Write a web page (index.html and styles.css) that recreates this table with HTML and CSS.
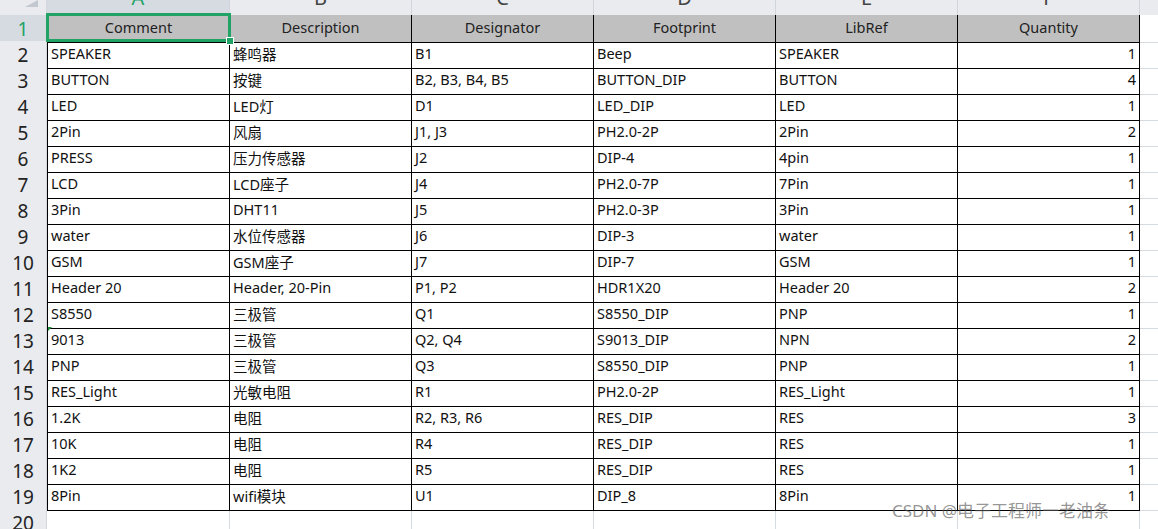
FILE: index.html
```html
<!DOCTYPE html>
<html>
<head>
<meta charset="utf-8">
<link rel="stylesheet" href="styles.css">
</head>
<body>
<div class="sheet">
  <div class="row colhdr">
    <div class="corner"><span class="tri"></span></div>
    <div class="ch sel"><span>A</span></div>
    <div class="ch"><span>B</span></div>
    <div class="ch"><span>C</span></div>
    <div class="ch"><span>D</span></div>
    <div class="ch"><span>E</span></div>
    <div class="ch"><span>F</span></div>
    <div class="ch rest"></div>
  </div>
  <div class="row head">
    <div class="rh sel">1</div>
    <div class="c a ctr">Comment</div><div class="c ctr">Description</div><div class="c ctr">Designator</div><div class="c ctr">Footprint</div><div class="c ctr">LibRef</div><div class="c ctr">Quantity</div><div class="x"></div>
  </div>
  <div class="row"><div class="rh">2</div><div class="c a">SPEAKER</div><div class="c cj">蜂鸣器</div><div class="c">B1</div><div class="c">Beep</div><div class="c">SPEAKER</div><div class="c n">1</div><div class="x"></div></div>
  <div class="row"><div class="rh">3</div><div class="c a">BUTTON</div><div class="c cj">按键</div><div class="c">B2, B3, B4, B5</div><div class="c">BUTTON_DIP</div><div class="c">BUTTON</div><div class="c n">4</div><div class="x"></div></div>
  <div class="row"><div class="rh">4</div><div class="c a">LED</div><div class="c cj">LED灯</div><div class="c">D1</div><div class="c">LED_DIP</div><div class="c">LED</div><div class="c n">1</div><div class="x"></div></div>
  <div class="row"><div class="rh">5</div><div class="c a">2Pin</div><div class="c cj">风扇</div><div class="c">J1, J3</div><div class="c">PH2.0-2P</div><div class="c">2Pin</div><div class="c n">2</div><div class="x"></div></div>
  <div class="row"><div class="rh">6</div><div class="c a">PRESS</div><div class="c cj">压力传感器</div><div class="c">J2</div><div class="c">DIP-4</div><div class="c">4pin</div><div class="c n">1</div><div class="x"></div></div>
  <div class="row"><div class="rh">7</div><div class="c a">LCD</div><div class="c cj">LCD座子</div><div class="c">J4</div><div class="c">PH2.0-7P</div><div class="c">7Pin</div><div class="c n">1</div><div class="x"></div></div>
  <div class="row"><div class="rh">8</div><div class="c a">3Pin</div><div class="c">DHT11</div><div class="c">J5</div><div class="c">PH2.0-3P</div><div class="c">3Pin</div><div class="c n">1</div><div class="x"></div></div>
  <div class="row"><div class="rh">9</div><div class="c a">water</div><div class="c cj">水位传感器</div><div class="c">J6</div><div class="c">DIP-3</div><div class="c">water</div><div class="c n">1</div><div class="x"></div></div>
  <div class="row"><div class="rh">10</div><div class="c a">GSM</div><div class="c cj">GSM座子</div><div class="c">J7</div><div class="c">DIP-7</div><div class="c">GSM</div><div class="c n">1</div><div class="x"></div></div>
  <div class="row"><div class="rh">11</div><div class="c a">Header 20</div><div class="c">Header, 20-Pin</div><div class="c">P1, P2</div><div class="c">HDR1X20</div><div class="c">Header 20</div><div class="c n">2</div><div class="x"></div></div>
  <div class="row"><div class="rh">12</div><div class="c a">S8550</div><div class="c cj">三极管</div><div class="c">Q1</div><div class="c">S8550_DIP</div><div class="c">PNP</div><div class="c n">1</div><div class="x"></div></div>
  <div class="row"><div class="rh">13</div><div class="c a txt">9013</div><div class="c cj">三极管</div><div class="c">Q2, Q4</div><div class="c">S9013_DIP</div><div class="c">NPN</div><div class="c n">2</div><div class="x"></div></div>
  <div class="row"><div class="rh">14</div><div class="c a">PNP</div><div class="c cj">三极管</div><div class="c">Q3</div><div class="c">S8550_DIP</div><div class="c">PNP</div><div class="c n">1</div><div class="x"></div></div>
  <div class="row"><div class="rh">15</div><div class="c a">RES_Light</div><div class="c cj">光敏电阻</div><div class="c">R1</div><div class="c">PH2.0-2P</div><div class="c">RES_Light</div><div class="c n">1</div><div class="x"></div></div>
  <div class="row"><div class="rh">16</div><div class="c a">1.2K</div><div class="c cj">电阻</div><div class="c">R2, R3, R6</div><div class="c">RES_DIP</div><div class="c">RES</div><div class="c n">3</div><div class="x"></div></div>
  <div class="row"><div class="rh">17</div><div class="c a">10K</div><div class="c cj">电阻</div><div class="c">R4</div><div class="c">RES_DIP</div><div class="c">RES</div><div class="c n">1</div><div class="x"></div></div>
  <div class="row"><div class="rh">18</div><div class="c a">1K2</div><div class="c cj">电阻</div><div class="c">R5</div><div class="c">RES_DIP</div><div class="c">RES</div><div class="c n">1</div><div class="x"></div></div>
  <div class="row"><div class="rh">19</div><div class="c a">8Pin</div><div class="c cj">wifi模块</div><div class="c">U1</div><div class="c">DIP_8</div><div class="c">8Pin</div><div class="c n">1</div><div class="x"></div></div>
  <div class="row empty"><div class="rh">20</div><div class="e"></div><div class="e"></div><div class="e"></div><div class="e"></div><div class="e"></div><div class="e"></div><div class="x"></div></div>

  <div class="selbox"><span class="handle"></span></div>
  <div class="watermark">CSDN @电子工程师一老油条</div>
</div>
</body>
</html>
```

FILE: styles.css
```css
* { box-sizing: border-box; }
html, body {
  margin: 0;
  padding: 0;
  background: #ffffff;
  overflow: hidden;
}
body {
  width: 1158px;
  height: 529px;
  font-family: "Noto Sans", "Noto Sans CJK SC", sans-serif;
  font-size: 14.5px;
  color: #111;
}
.sheet {
  position: relative;
  width: 1158px;
  height: 529px;
  overflow: hidden;
}
.row {
  display: grid;
  grid-template-columns: 47px 183px repeat(5, 182px) 1fr;
  height: 26px;
}
.colhdr {
  height: 15px;
  background: #e9ebef;
}
.corner {
  position: relative;
  background: #e9ebef;
  border-right: 1px solid #d3d7de;
}
.tri {
  position: absolute;
  right: 8px;
  bottom: 8px;
  width: 0;
  height: 0;
  border-left: 13px solid transparent;
  border-bottom: 7px solid #c3c7ce;
}
.ch {
  position: relative;
  overflow: hidden;
  border-right: 1px solid #d0d4db;
  display: flex;
  justify-content: center;
  color: #444;
  font-size: 20px;
  line-height: 20px;
}
.ch span {
  margin-top: -12px;
}
.ch.sel {
  background: #d6dae1;
  color: #21a366;
}
.ch.rest {
  border-right: none;
}
.rh {
  background: #e9ebef;
  border-right: 1px solid #d3d7de;
  border-bottom: 1px solid #d3d7de;
  display: flex;
  align-items: center;
  justify-content: center;
  font-size: 19px;
  color: #222;
  padding-top: 1px;
}
.rh.sel {
  background: #d6dae1;
  color: #21a366;
}
.c {
  position: relative;
  border-right: 1px solid #000;
  border-bottom: 1px solid #000;
  display: flex;
  align-items: center;
  padding: 0 3px 3px 3px;
  white-space: nowrap;
  overflow: hidden;
}
.c.cj {
  padding-bottom: 3px;
}
.c.a {
  border-left: 1px solid #000;
}
.c.ctr {
  justify-content: center;
  color: #222;
}
.c.n {
  justify-content: flex-end;
}
.head .c {
  background: #c0c0c0;
}
.c.txt::before {
  content: "";
  position: absolute;
  left: 0;
  top: 0;
  width: 0;
  height: 0;
  border-top: 4px solid #1e8c3a;
  border-right: 4px solid transparent;
}
.x {
  border-bottom: 1px solid #d6dae1;
}
.e {
  border-right: 1px solid #d6dae1;
  border-bottom: 1px solid #d6dae1;
}
.empty .e:first-of-type {
  border-left: 1px solid #d6dae1;
}
.selbox {
  position: absolute;
  left: 46px;
  top: 13px;
  width: 185px;
  height: 29px;
  border: 3px solid #21a366;
}
.handle {
  position: absolute;
  right: -6px;
  bottom: -6px;
  width: 8px;
  height: 8px;
  background: #21a366;
  border: 1px solid #ffffff;
}
.watermark {
  position: absolute;
  left: 892px;
  top: 499px;
  font-size: 17px;
  line-height: 24px;
  color: rgba(90, 90, 90, 0.65);
  white-space: nowrap;
  font-family: "Noto Sans", "Noto Sans CJK SC", sans-serif;
}
```
